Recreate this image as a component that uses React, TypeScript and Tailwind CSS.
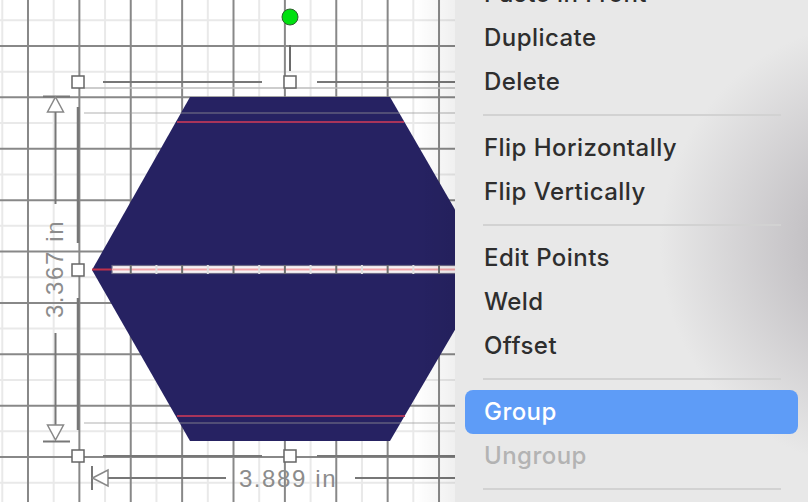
import React from "react";

type Item = { label: string; active?: boolean; disabled?: boolean } | "sep";

const menuItems: Item[] = [
  { label: "Paste in Front" },
  { label: "Duplicate" },
  { label: "Delete" },
  "sep",
  { label: "Flip Horizontally" },
  { label: "Flip Vertically" },
  "sep",
  { label: "Edit Points" },
  { label: "Weld" },
  { label: "Offset" },
  "sep",
  { label: "Group", active: true },
  { label: "Ungroup", disabled: true },
  "sep",
];

const STEP = 25.69;
const X0 = 2.3;
const Y0 = 20.3;

// grid offsets; even index = minor line, odd index = major line
const xs = Array.from({ length: 19 }, (_, i) => X0 + i * STEP);
const ys = Array.from({ length: 20 }, (_, i) => Y0 + i * STEP);

function Canvas() {
  const hex = "190,97 390,97 490,270 390,441 190,441 92,270";
  return (
    <svg width="455" height="502" viewBox="0 0 455 502" className="block">
      <defs>
        <linearGradient id="edgeShade" x1="0" x2="1" y1="0" y2="0">
          <stop offset="0" stopColor="#000" stopOpacity="0" />
          <stop offset="1" stopColor="#000" stopOpacity="0.06" />
        </linearGradient>
        <clipPath id="barClip">
          <rect x="112" y="265" width="343" height="9" />
        </clipPath>
      </defs>

      <rect width="455" height="502" fill="#ffffff" />

      {/* minor grid */}
      {xs.map((x, i) =>
        i % 2 === 0 ? <line key={"mx" + i} x1={x} x2={x} y1="0" y2="502" stroke="#e9e9e9" strokeWidth="2" /> : null
      )}
      {ys.map((y, i) =>
        i % 2 === 0 ? <line key={"my" + i} y1={y} y2={y} x1="0" x2="455" stroke="#e9e9e9" strokeWidth="2" /> : null
      )}
      {/* major grid */}
      {xs.map((x, i) =>
        i % 2 === 1 ? <line key={"Mx" + i} x1={x} x2={x} y1="0" y2="502" stroke="#888888" strokeWidth="2" /> : null
      )}
      {ys.map((y, i) =>
        i % 2 === 1 ? <line key={"My" + i} y1={y} y2={y} x1="0" x2="455" stroke="#888888" strokeWidth="2" /> : null
      )}

      {/* shape */}
      <polygon points={hex} fill="#262262" />
      <line x1="84" x2="455" y1="113" y2="113" stroke="#9a9a9a" strokeWidth="1.5" opacity="0.5" />
      <line x1="84" x2="455" y1="423" y2="423" stroke="#9a9a9a" strokeWidth="1.5" opacity="0.5" />
      <line x1="84" x2="455" y1="88" y2="88" stroke="#bcbcbc" strokeWidth="1.5" />
      <line x1="177" x2="404" y1="122" y2="122" stroke="#a8345a" strokeWidth="2" />
      <line x1="177" x2="405" y1="416" y2="416" stroke="#a8345a" strokeWidth="2" />

      {/* center score line */}
      <line x1="92" x2="112" y1="269.5" y2="269.5" stroke="#c0304a" strokeWidth="2" />
      <rect x="112" y="265.5" width="345" height="8" fill="#f6f2f4" stroke="#6d6a86" strokeWidth="1.2" />
      <line x1="112" x2="455" y1="269.5" y2="269.5" stroke="#f2a4a8" strokeWidth="2" />
      <g clipPath="url(#barClip)">
        {xs.map((x, i) => (
          <line
            key={"bt" + i}
            x1={x}
            x2={x}
            y1="264"
            y2="275"
            stroke={i % 2 === 1 ? "#6e6e6e" : "#dedede"}
            strokeWidth="2"
          />
        ))}
      </g>

      {/* selection box edges */}
      <line x1="103" x2="262" y1="82" y2="82" stroke="#777" strokeWidth="2" />
      <line x1="317" x2="455" y1="82" y2="82" stroke="#777" strokeWidth="2" />
      <line x1="103" x2="262" y1="456" y2="456" stroke="#777" strokeWidth="2" />
      <line x1="317" x2="455" y1="456" y2="456" stroke="#777" strokeWidth="2" />
      <line x1="78" x2="78" y1="107" y2="243" stroke="#777" strokeWidth="2.5" />
      <line x1="78" x2="78" y1="298" y2="430" stroke="#777" strokeWidth="2.5" />

      {/* rotate handle */}
      <line x1="290" x2="290" y1="45" y2="71" stroke="#6a6a6a" strokeWidth="2" />
      <circle cx="290" cy="17" r="8" fill="#00e010" stroke="#2f5f2f" strokeWidth="1" />

      {/* resize handles */}
      {[
        [78, 82],
        [290, 82],
        [78, 270],
        [78, 456],
        [290, 456],
      ].map(([cx, cy]) => (
        <rect key={`${cx}-${cy}`} x={cx - 6} y={cy - 6} width="12" height="12" fill="#fff" stroke="#666" strokeWidth="1.5" />
      ))}

      {/* height dimension */}
      <line x1="43" x2="70" y1="96.5" y2="96.5" stroke="#777" strokeWidth="2" />
      <polygon points="55.5,97 63.5,112 47.5,112" fill="#fff" stroke="#888" strokeWidth="1.5" />
      <line x1="55.5" x2="55.5" y1="112" y2="204" stroke="#777" strokeWidth="2" />
      <text
        x="0"
        y="0"
        transform="translate(63 269) rotate(-90)"
        textAnchor="middle"
        fill="#8c8c8c"
        fontSize="24"
        letterSpacing="1.6"
        fontFamily="'Liberation Sans', Arial, sans-serif"
      >
        3.367 in
      </text>
      <line x1="55.5" x2="55.5" y1="333" y2="425" stroke="#777" strokeWidth="2" />
      <polygon points="55.5,440 63.5,425 47.5,425" fill="#fff" stroke="#888" strokeWidth="1.5" />
      <line x1="43" x2="70" y1="441.5" y2="441.5" stroke="#777" strokeWidth="2" />

      {/* width dimension */}
      <line x1="92" x2="92" y1="466" y2="490" stroke="#777" strokeWidth="2" />
      <polygon points="92.5,478 108,470 108,486" fill="#fff" stroke="#888" strokeWidth="1.5" />
      <line x1="108" x2="226" y1="478" y2="478" stroke="#777" strokeWidth="2" />
      <text
        x="288"
        y="487"
        textAnchor="middle"
        fill="#8c8c8c"
        fontSize="24"
        letterSpacing="1.6"
        fontFamily="'Liberation Sans', Arial, sans-serif"
      >
        3.889 in
      </text>
      <line x1="355" x2="455" y1="478" y2="478" stroke="#777" strokeWidth="2" />

      <rect x="415" y="0" width="40" height="502" fill="url(#edgeShade)" />
    </svg>
  );
}

function ContextMenu() {
  return (
    <div className="relative flex-1 overflow-hidden bg-[#e8e8e8] bg-[radial-gradient(circle_at_430px_245px,#aeacaf_0px,#c7c5c8_90px,#e8e8e8_225px)]">
      <div className="-mt-[28px] flex flex-col px-[10px] font-['Inter','Noto_Sans',sans-serif] text-[24px] font-medium tracking-[0.45px]">
        {menuItems.map((item, i) =>
          item === "sep" ? (
            <div key={i} className="flex h-[22px] items-center pl-[18px] pr-[17px]">
              <div className="h-[2px] w-full bg-[#d2d2d2]" />
            </div>
          ) : (
            <div
              key={i}
              className={`flex h-[44px] items-center rounded-[8px] pl-[19px] leading-none ${
                item.active ? "bg-[#5e9cf7] text-white" : item.disabled ? "text-[#b3b3b3]" : "text-[#2e2e2e]"
              }`}
            >
              {item.label}
            </div>
          )
        )}
      </div>
    </div>
  );
}

export default function App() {
  return (
    <div className="flex h-[502px] w-[808px] overflow-hidden bg-white">
      <div className="w-[455px] shrink-0">
        <Canvas />
      </div>
      <ContextMenu />
    </div>
  );
}
